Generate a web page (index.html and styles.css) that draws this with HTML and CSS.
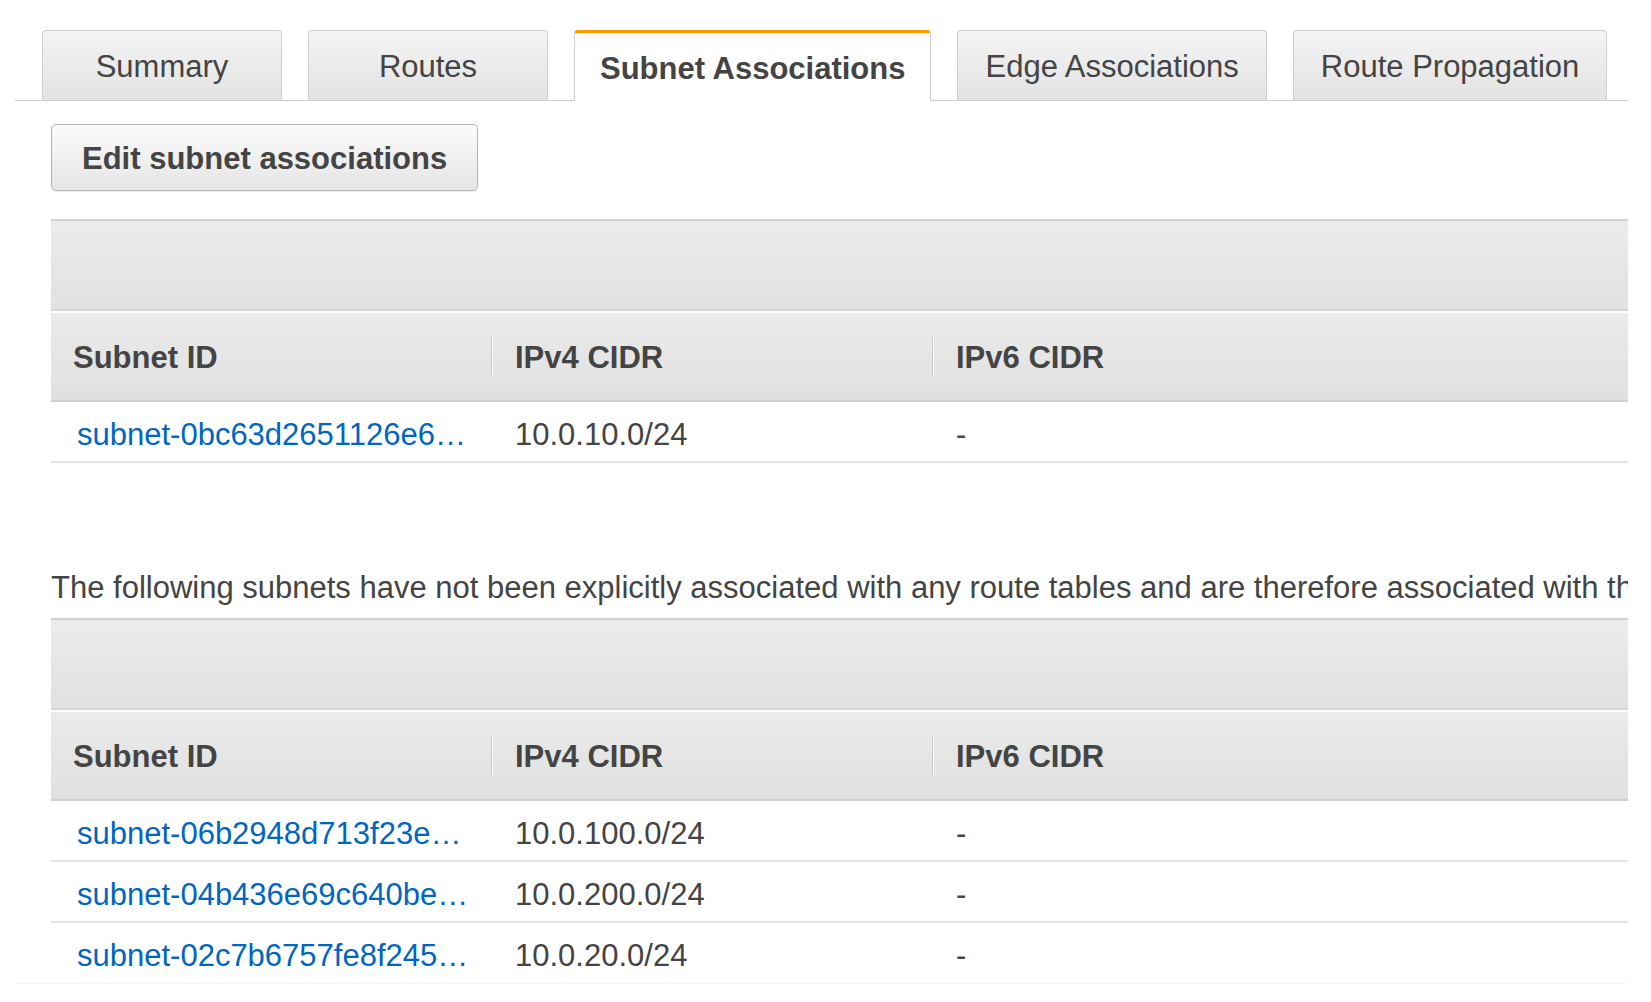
FILE: index.html
```html
<!DOCTYPE html>
<html lang="en">
<head>
<meta charset="utf-8">
<title>Route table – Subnet Associations</title>
<link rel="stylesheet" href="styles.css">
</head>
<body>
<div class="page">
  <div class="tabs">
    <div class="tab">Summary</div>
    <div class="tab">Routes</div>
    <div class="tab tab-active">Subnet Associations</div>
    <div class="tab">Edge Associations</div>
    <div class="tab">Route Propagation</div>
  </div>

  <div class="content">
    <button class="btn">Edit subnet associations</button>

    <div class="grid grid-a">
      <div class="toolbar"></div>
      <div class="head">
        <div class="hcell c1">Subnet ID</div>
        <div class="hcell c2 sep">IPv4 CIDR</div>
        <div class="hcell c3 sep">IPv6 CIDR</div>
      </div>
      <div class="row">
        <div class="cell c1"><a class="link" href="#">subnet-0bc63d2651126e6…</a></div>
        <div class="cell c2">10.0.10.0/24</div>
        <div class="cell c3">-</div>
      </div>
    </div>

    <p class="note">The following subnets have not been explicitly associated with any route tables and are therefore associated with the main route table:</p>

    <div class="grid grid-b">
      <div class="toolbar"></div>
      <div class="head">
        <div class="hcell c1">Subnet ID</div>
        <div class="hcell c2 sep">IPv4 CIDR</div>
        <div class="hcell c3 sep">IPv6 CIDR</div>
      </div>
      <div class="row">
        <div class="cell c1"><a class="link" href="#">subnet-06b2948d713f23e…</a></div>
        <div class="cell c2">10.0.100.0/24</div>
        <div class="cell c3">-</div>
      </div>
      <div class="row">
        <div class="cell c1"><a class="link" href="#">subnet-04b436e69c640be…</a></div>
        <div class="cell c2">10.0.200.0/24</div>
        <div class="cell c3">-</div>
      </div>
      <div class="row">
        <div class="cell c1"><a class="link" href="#">subnet-02c7b6757fe8f245…</a></div>
        <div class="cell c2">10.0.20.0/24</div>
        <div class="cell c3">-</div>
      </div>
    </div>
  </div>
</div>
</body>
</html>
```

FILE: styles.css
```css
html, body {
  margin: 0;
  padding: 0;
  background: #ffffff;
}

body {
  font-family: "Liberation Sans", Arial, Helvetica, sans-serif;
  color: #444444;
  font-size: 31px;
}

.page {
  width: 1613px;
  margin-left: 15px;
  padding-top: 30px;
  overflow: hidden;
  height: 953px;
  border-bottom: 1px solid #f7f7f7;
}

/* ---------- Tabs ---------- */
.tabs {
  display: flex;
  gap: 26px;
  padding-left: 27px;
  border-bottom: 1px solid #cccccc;
  height: 70px;
}

.tab {
  box-sizing: border-box;
  height: 70px;
  min-width: 240px;
  padding: 2px 27px 0 27px;
  display: flex;
  align-items: center;
  justify-content: center;
  border: 1px solid #cfcfcf;
  border-bottom: none;
  border-radius: 4px 4px 0 0;
  background: linear-gradient(#f4f4f4, #e3e3e3);
  color: #444444;
  font-size: 31px;
  white-space: nowrap;
}

.tab-active {
  height: 71px;
  border-top: 3px solid #ff9900;
  background: #ffffff;
  font-weight: bold;
  padding: 3px 25px 0 25px;
}

/* ---------- Content ---------- */
.content {
  padding-left: 36px;
}

.btn {
  display: block;
  box-sizing: border-box;
  margin: 23px 0 0 0;
  height: 67px;
  padding: 2px 30px 0 30px;
  border: 1px solid #b5b5b5;
  border-radius: 5px;
  background: linear-gradient(#fbfbfb, #e5e5e5);
  box-shadow: 0 1px 1px rgba(0, 0, 0, 0.08);
  font-family: "Liberation Sans", Arial, Helvetica, sans-serif;
  font-size: 31px;
  font-weight: bold;
  color: #444444;
  white-space: nowrap;
}

/* ---------- Grids ---------- */
.grid {
  border-top: 2px solid #d2d2d2;
}

.grid-a {
  margin-top: 28px;
}

.toolbar {
  height: 88px;
  background: linear-gradient(#ececec, #e1e1e1);
  border-bottom: 2px solid #d5d5d5;
}

.head {
  display: flex;
  margin-top: 2px;
  height: 87px;
  background: linear-gradient(#ebebeb, #e0e0e0);
  border-bottom: 2px solid #d0d0d0;
  font-weight: bold;
}

.row {
  display: flex;
  height: 59px;
  border-bottom: 2px solid #e3e3e3;
}

.grid-b .row:last-child {
  border-bottom-color: #ffffff;
}

.hcell,
.cell {
  display: flex;
  align-items: center;
  box-sizing: border-box;
  white-space: nowrap;
  overflow: hidden;
}

.c1 { width: 440px; }
.c2 { width: 441px; }
.c3 { flex: 1; }

.hcell { padding-top: 2px; }
.hcell.c1 { padding-left: 22px; }
.hcell.c2,
.hcell.c3 { padding-left: 24px; }

.cell { padding-top: 6px; }
.cell.c1 { padding-left: 26px; }
.cell.c2,
.cell.c3 { padding-left: 24px; }

.sep {
  background:
    linear-gradient(#c9c9c9, #c9c9c9) 0 center / 1px 40px no-repeat,
    linear-gradient(#fafafa, #fafafa) 1px center / 1px 40px no-repeat;
}

.link {
  color: #0066c0;
  text-decoration: none;
}

.note {
  margin: 107px 0 12px 0;
  line-height: 36px;
  white-space: nowrap;
  color: #444444;
}
```
